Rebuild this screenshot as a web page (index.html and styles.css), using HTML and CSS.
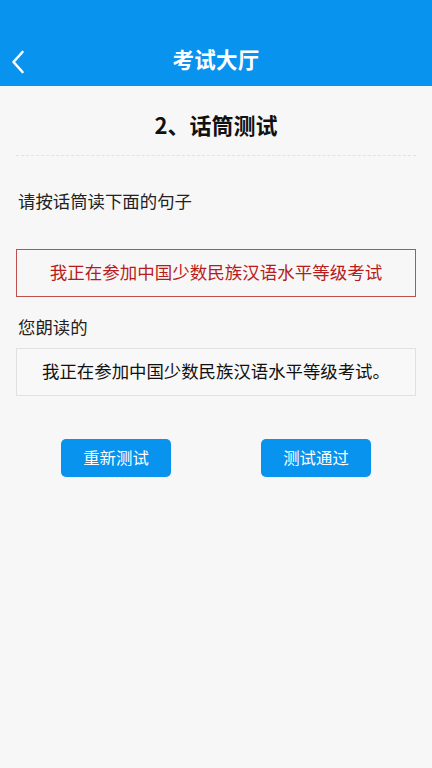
FILE: index.html
```html
<!DOCTYPE html>
<html lang="zh">
<head>
<meta charset="utf-8">
<link rel="stylesheet" href="styles.css">
</head>
<body>
<header class="topbar">
  <span class="back">
    <svg width="14" height="24" viewBox="0 0 14 24"><path d="M11.5 2 L2.5 12 L11.5 22" fill="none" stroke="#fff" stroke-width="2.6" stroke-linecap="round" stroke-linejoin="round"/></svg>
  </span>
  <h1 class="title">考试大厅</h1>
</header>
<main class="content">
  <h2 class="step">2、话筒测试</h2>
  <div class="divider"></div>
  <p class="label first">请按话筒读下面的句子</p>
  <div class="target">我正在参加中国少数民族汉语水平等级考试</div>
  <p class="label second">您朗读的</p>
  <div class="result">我正在参加中国少数民族汉语水平等级考试。</div>
  <div class="actions">
    <button class="btn">重新测试</button>
    <button class="btn">测试通过</button>
  </div>
</main>
</body>
</html>
```

FILE: styles.css
```css
html, body {
  margin: 0;
  padding: 0;
}
body {
  width: 432px;
  height: 768px;
  background: #f7f7f7;
  font-family: "Noto Sans CJK SC", "Noto Sans", sans-serif;
  overflow: hidden;
}
.topbar {
  height: 86px;
  background: #0893ef;
  position: relative;
  display: flex;
  align-items: flex-end;
  justify-content: center;
  box-sizing: border-box;
  padding-bottom: 13px;
}
.back {
  position: absolute;
  left: 11px;
  top: 50px;
  width: 14px;
  height: 24px;
  display: block;
}
.back svg { display: block; }
.title {
  margin: 0;
  color: #fff;
  font-size: 21.5px;
  font-weight: 700;
  line-height: 28px;
  letter-spacing: 0.3px;
}
.content {
  padding: 0 16px;
  display: flex;
  flex-direction: column;
}
.step {
  margin: 23px 0 0;
  text-align: center;
  font-size: 22px;
  font-weight: 700;
  color: #111;
  line-height: 30px;
}
.divider {
  margin-top: 16px;
  height: 0;
  border-top: 1px dashed #e2e2e2;
}
.label {
  margin: 0;
  font-size: 17.4px;
  color: #222;
  line-height: 24px;
  padding-left: 2px;
}
.label.first { margin-top: 33px; }
.label.second { margin-top: 18px; }
.target {
  margin-top: 36px;
  height: 48px;
  box-sizing: border-box;
  border: 1px solid #c0504d;
  color: #b71c1c;
  font-size: 17.5px;
  display: flex;
  align-items: center;
  justify-content: center;
  padding-bottom: 3px;
}
.result {
  margin-top: 9px;
  height: 48px;
  box-sizing: border-box;
  border: 1px solid #e1e1e1;
  background: #f8f8f8;
  color: #111;
  font-size: 17.4px;
  display: flex;
  align-items: center;
  justify-content: center;
  padding-bottom: 3px;
}
.actions {
  margin-top: 43px;
  display: flex;
  justify-content: space-between;
  padding: 0 45px;
}
.btn {
  width: 110px;
  height: 38px;
  border: none;
  border-radius: 5px;
  background: #0893ef;
  color: #fff;
  font-family: inherit;
  font-size: 16.4px;
  padding: 0 0 3px;
}
```
